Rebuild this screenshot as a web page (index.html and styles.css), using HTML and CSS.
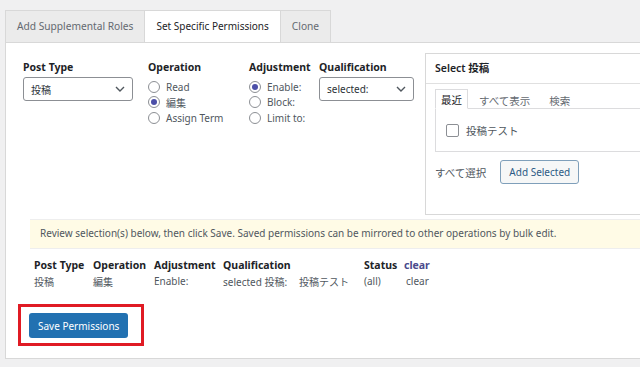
FILE: index.html
```html
<!DOCTYPE html>
<html lang="ja">
<head>
    <meta charset="UTF-8">
    <meta name="viewport" content="width=device-width, initial-scale=1.0">
    <title>Set Specific Permissions</title>
    <link rel="stylesheet" href="styles.css">
</head>
<body>
    <div class="tabs">
        <a class="tab">Add Supplemental Roles</a>
        <a class="tab active">Set Specific Permissions</a>
        <a class="tab">Clone</a>
    </div>

    <div class="panel">
        <div class="top-row">
            <div class="fields">
                <div class="field field-type">
                    <label class="field-label">Post Type</label>
                    <div class="select select-type">
                        <span>投稿</span>
                        <svg class="chevron" width="10" height="6" viewBox="0 0 10 6"><path d="M1 1l4 4 4-4" fill="none" stroke="#50575e" stroke-width="1.4"/></svg>
                    </div>
                </div>
                <div class="field field-op">
                    <label class="field-label">Operation</label>
                    <div class="radio-list">
                        <div class="radio"><span class="dot"></span>Read</div>
                        <div class="radio"><span class="dot checked"></span>編集</div>
                        <div class="radio"><span class="dot"></span>Assign Term</div>
                    </div>
                </div>
                <div class="field field-adj">
                    <label class="field-label">Adjustment</label>
                    <div class="radio-list">
                        <div class="radio"><span class="dot checked"></span>Enable:</div>
                        <div class="radio"><span class="dot"></span>Block:</div>
                        <div class="radio"><span class="dot"></span>Limit to:</div>
                    </div>
                </div>
                <div class="field field-qual">
                    <label class="field-label">Qualification</label>
                    <div class="select select-qual">
                        <span>selected:</span>
                        <svg class="chevron" width="10" height="6" viewBox="0 0 10 6"><path d="M1 1l4 4 4-4" fill="none" stroke="#50575e" stroke-width="1.4"/></svg>
                    </div>
                </div>
            </div>

            <div class="select-box">
                <div class="select-box-head">Select 投稿</div>
                <div class="select-box-body">
                    <div class="mini-tabs">
                        <span class="mini-tab active">最近</span>
                        <span class="mini-tab">すべて表示</span>
                        <span class="mini-tab">検索</span>
                    </div>
                    <div class="mini-list">
                        <label class="check"><span class="box"></span>投稿テスト</label>
                    </div>
                    <div class="select-actions">
                        <span class="select-all">すべて選択</span>
                        <button class="btn-secondary">Add Selected</button>
                    </div>
                </div>
            </div>
        </div>

        <div class="notice">Review selection(s) below, then click Save. Saved permissions can be mirrored to other operations by bulk edit.</div>

        <table class="pending">
            <tr>
                <th class="col-type">Post Type</th>
                <th class="col-op">Operation</th>
                <th class="col-adj">Adjustment</th>
                <th class="col-qual" colspan="2">Qualification</th>
                <th class="col-status">Status</th>
                <th><a class="clear-link">clear</a></th>
            </tr>
            <tr>
                <td>投稿</td>
                <td>編集</td>
                <td>Enable:</td>
                <td class="col-qual1">selected 投稿:</td>
                <td class="col-qual2">投稿テスト</td>
                <td>(all)</td>
                <td><a class="clear-row">clear</a></td>
            </tr>
        </table>

        <div class="save-wrap">
            <button class="btn-primary">Save Permissions</button>
        </div>
    </div>
</body>
</html>
```

FILE: styles.css
```css
body {
    margin: 0;
    background-color: #f0f0f1;
    font-family: 'Noto Sans', 'Noto Sans CJK JP', sans-serif;
    font-size: 10px;
    color: #3c434a;
    overflow: hidden;
}

.tabs {
    display: flex;
    padding: 10px 0 0 5px;
}

.tab {
    height: 31px;
    line-height: 31px;
    padding: 0 11px;
    border: 1px solid #d8d8d8;
    border-bottom: none;
    background-color: #ebebeb;
    color: #646970;
    margin-right: -1px;
    font-size: 10.2px;
}

.tab.active {
    background-color: #fff;
    color: #1d2327;
    position: relative;
    z-index: 1;
    margin-bottom: -1px;
    font-size: 10px;
}

.panel {
    margin-left: 5px;
    background-color: #fff;
    border: 1px solid #d8d8d8;
    border-right: none;
    height: 315px;
}

.top-row {
    display: flex;
    padding: 10px 0 0 17px;
}

.fields {
    display: flex;
    padding-top: 7px;
    width: 402px;
}

.field-label {
    display: block;
    font-weight: bold;
    font-size: 10.5px;
    color: #1d2327;
    margin-bottom: 3px;
}

.field-type { width: 125px; }
.field-op { width: 101px; }
.field-adj { width: 70px; }
.field-qual { width: 106px; }

.select {
    display: flex;
    align-items: center;
    justify-content: space-between;
    border: 1px solid #8c8f94;
    border-radius: 3px;
    padding: 0 7px;
    color: #2c3338;
    box-sizing: border-box;
}

.select-type {
    width: 110px;
    height: 24px;
}

.select-qual {
    width: 95px;
    height: 24px;
    margin-top: 3px;
}

.radio-list {
    padding-top: 2px;
}

.radio {
    display: flex;
    align-items: center;
    height: 15.5px;
    color: #50575e;
}

.dot {
    width: 10px;
    height: 10px;
    border: 1px solid #8c8f94;
    border-radius: 50%;
    margin-right: 6px;
    position: relative;
}

.dot.checked::after {
    content: '';
    position: absolute;
    left: 2px;
    top: 2px;
    width: 6px;
    height: 6px;
    border-radius: 50%;
    background-color: #4c4fa8;
}

.select-box {
    flex: 1;
    height: 160px;
    border: 1px solid #d8d8d8;
    border-right: none;
}

.select-box-head {
    height: 29px;
    line-height: 29px;
    padding-left: 9px;
    font-weight: 600;
    font-size: 10.5px;
    color: #1d2327;
    border-bottom: 1px solid #e0e0e0;
}

.select-box-body {
    padding: 4px 0 0 9px;
}

.mini-tabs {
    display: flex;
    align-items: flex-end;
    height: 20px;
}

.mini-tab {
    padding: 0 5px;
    color: #646970;
    margin-right: 9px;
    font-size: 10.5px;
}

.mini-tab.active {
    border: 1px solid #dcdcde;
    border-bottom: 1px solid #fff;
    color: #1d2327;
    padding: 2px 5px 1px;
    margin-bottom: -1px;
    margin-right: 6px;
    position: relative;
}

.mini-list {
    border: 1px solid #dcdcde;
    border-right: none;
    height: 42px;
    padding: 0 0 0 10px;
    display: flex;
    align-items: center;
}

.check {
    display: flex;
    align-items: center;
    color: #50575e;
    font-size: 10.5px;
}

.box {
    width: 11px;
    height: 11px;
    border: 1px solid #8c8f94;
    border-radius: 2px;
    margin-right: 7px;
}

.select-actions {
    display: flex;
    align-items: center;
    margin-top: 8px;
}

.select-all {
    color: #50575e;
    margin-right: 14px;
    font-size: 10.5px;
}

.btn-secondary {
    font-family: inherit;
    font-size: 10px;
    height: 24px;
    padding: 0 8px;
    border: 1px solid #7f9fba;
    border-radius: 3px;
    background-color: #f6f7f7;
    color: #2c5a85;
}

.notice {
    margin: 4px 0 0 24px;
    height: 28px;
    line-height: 27px;
    padding-left: 10px;
    background-color: #fffbe6;
    border-top: 1px solid #eeeeee;
    border-bottom: 1px solid #eeeeee;
    color: #50575e;
    font-size: 10px;
}

.pending {
    border-collapse: collapse;
    margin: 8px 0 0 28px;
}

.pending th {
    text-align: left;
    font-weight: bold;
    font-size: 10.5px;
    color: #1d2327;
    padding: 0;
    height: 16px;
}

.pending td {
    color: #50575e;
    padding: 0;
    height: 16px;
}

.col-type { width: 59px; }
.col-op { width: 61px; }
.col-adj { width: 69px; }
.col-qual1 { width: 76px; }
.col-qual2 { width: 65px; }
.col-status { width: 40px; }

.clear-link {
    color: #4a4a8c;
}

.clear-row {
    color: #50575e;
    padding-left: 2px;
}

.save-wrap {
    display: inline-block;
    margin: 15px 0 0 12px;
    padding: 6px 13px 5px 8px;
    border: 3px solid #e01b24;
}

.btn-primary {
    display: block;
    font-family: inherit;
    font-size: 10px;
    height: 25px;
    padding: 0 9px;
    border: none;
    border-radius: 3px;
    background-color: #2271b1;
    color: #fff;
}
```
